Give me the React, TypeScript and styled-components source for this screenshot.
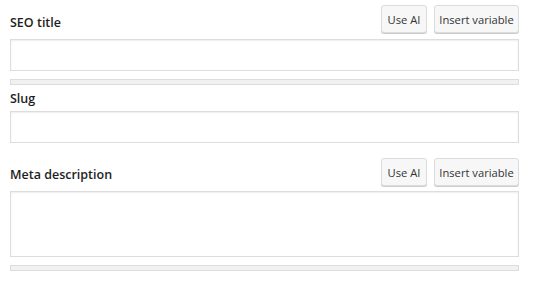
import React from "react";
import styled, { createGlobalStyle } from "styled-components";

const Global = createGlobalStyle`
  html, body { margin: 0; padding: 0; background: #fff; }
  body { font-family: "Open Sans", "Noto Sans", sans-serif; color: #1e1e1e; }
  * { box-sizing: border-box; }
`;

const Page = styled.div`
  width: 533px;
  padding: 5px 14px 0 10px;
  display: flex;
  flex-direction: column;
`;

const Field = styled.div<{ $mt?: number }>`
  display: flex;
  flex-direction: column;
  margin-top: ${(p) => p.$mt ?? 0}px;
`;

const HeaderRow = styled.div`
  display: flex;
  align-items: center;
  justify-content: space-between;
  height: 28px;
`;

const Label = styled.label<{ $pt?: number }>`
  font-size: 12.5px;
  font-weight: 600;
  line-height: 18px;
  color: #1e1e1e;
  padding-top: ${(p) => p.$pt ?? 0}px;
`;

const Buttons = styled.div`
  display: flex;
  gap: 7px;
`;

const Button = styled.button<{ $w: number }>`
  width: ${(p) => p.$w}px;
  height: 28px;
  padding: 0;
  font-family: inherit;
  font-size: 11.2px;
  color: #333;
  background: #f7f7f7;
  border: 1px solid #dcdcdc;
  border-radius: 3px;
  box-shadow: 0 1px 0 #ccc;
  cursor: pointer;
`;

const Input = styled.div<{ $h: number; $mt: number }>`
  height: ${(p) => p.$h}px;
  margin-top: ${(p) => p.$mt}px;
  border: 1px solid #ddd;
  box-shadow: inset 0 1px 2px rgba(0, 0, 0, 0.07);
  background: #fff;
`;

const Bar = styled.div`
  height: 6px;
  margin-top: 8px;
  background: #f1f1f1;
  border: 1px solid #ddd;
`;

export default function App() {
  return (
    <>
      <Global />
      <Page>
        <Field>
          <HeaderRow>
            <Label $pt={8}>SEO title</Label>
            <Buttons>
              <Button $w={46}>Use AI</Button>
              <Button $w={85}>Insert variable</Button>
            </Buttons>
          </HeaderRow>
          <Input $h={32} $mt={6} />
          <Bar />
        </Field>
        <Field $mt={5}>
          <Label>Slug</Label>
          <Input $h={32} $mt={3} />
        </Field>
        <Field $mt={15}>
          <HeaderRow>
            <Label $pt={6}>Meta description</Label>
            <Buttons>
              <Button $w={46}>Use AI</Button>
              <Button $w={85}>Insert variable</Button>
            </Buttons>
          </HeaderRow>
          <Input $h={66} $mt={5} />
          <Bar />
        </Field>
      </Page>
    </>
  );
}
